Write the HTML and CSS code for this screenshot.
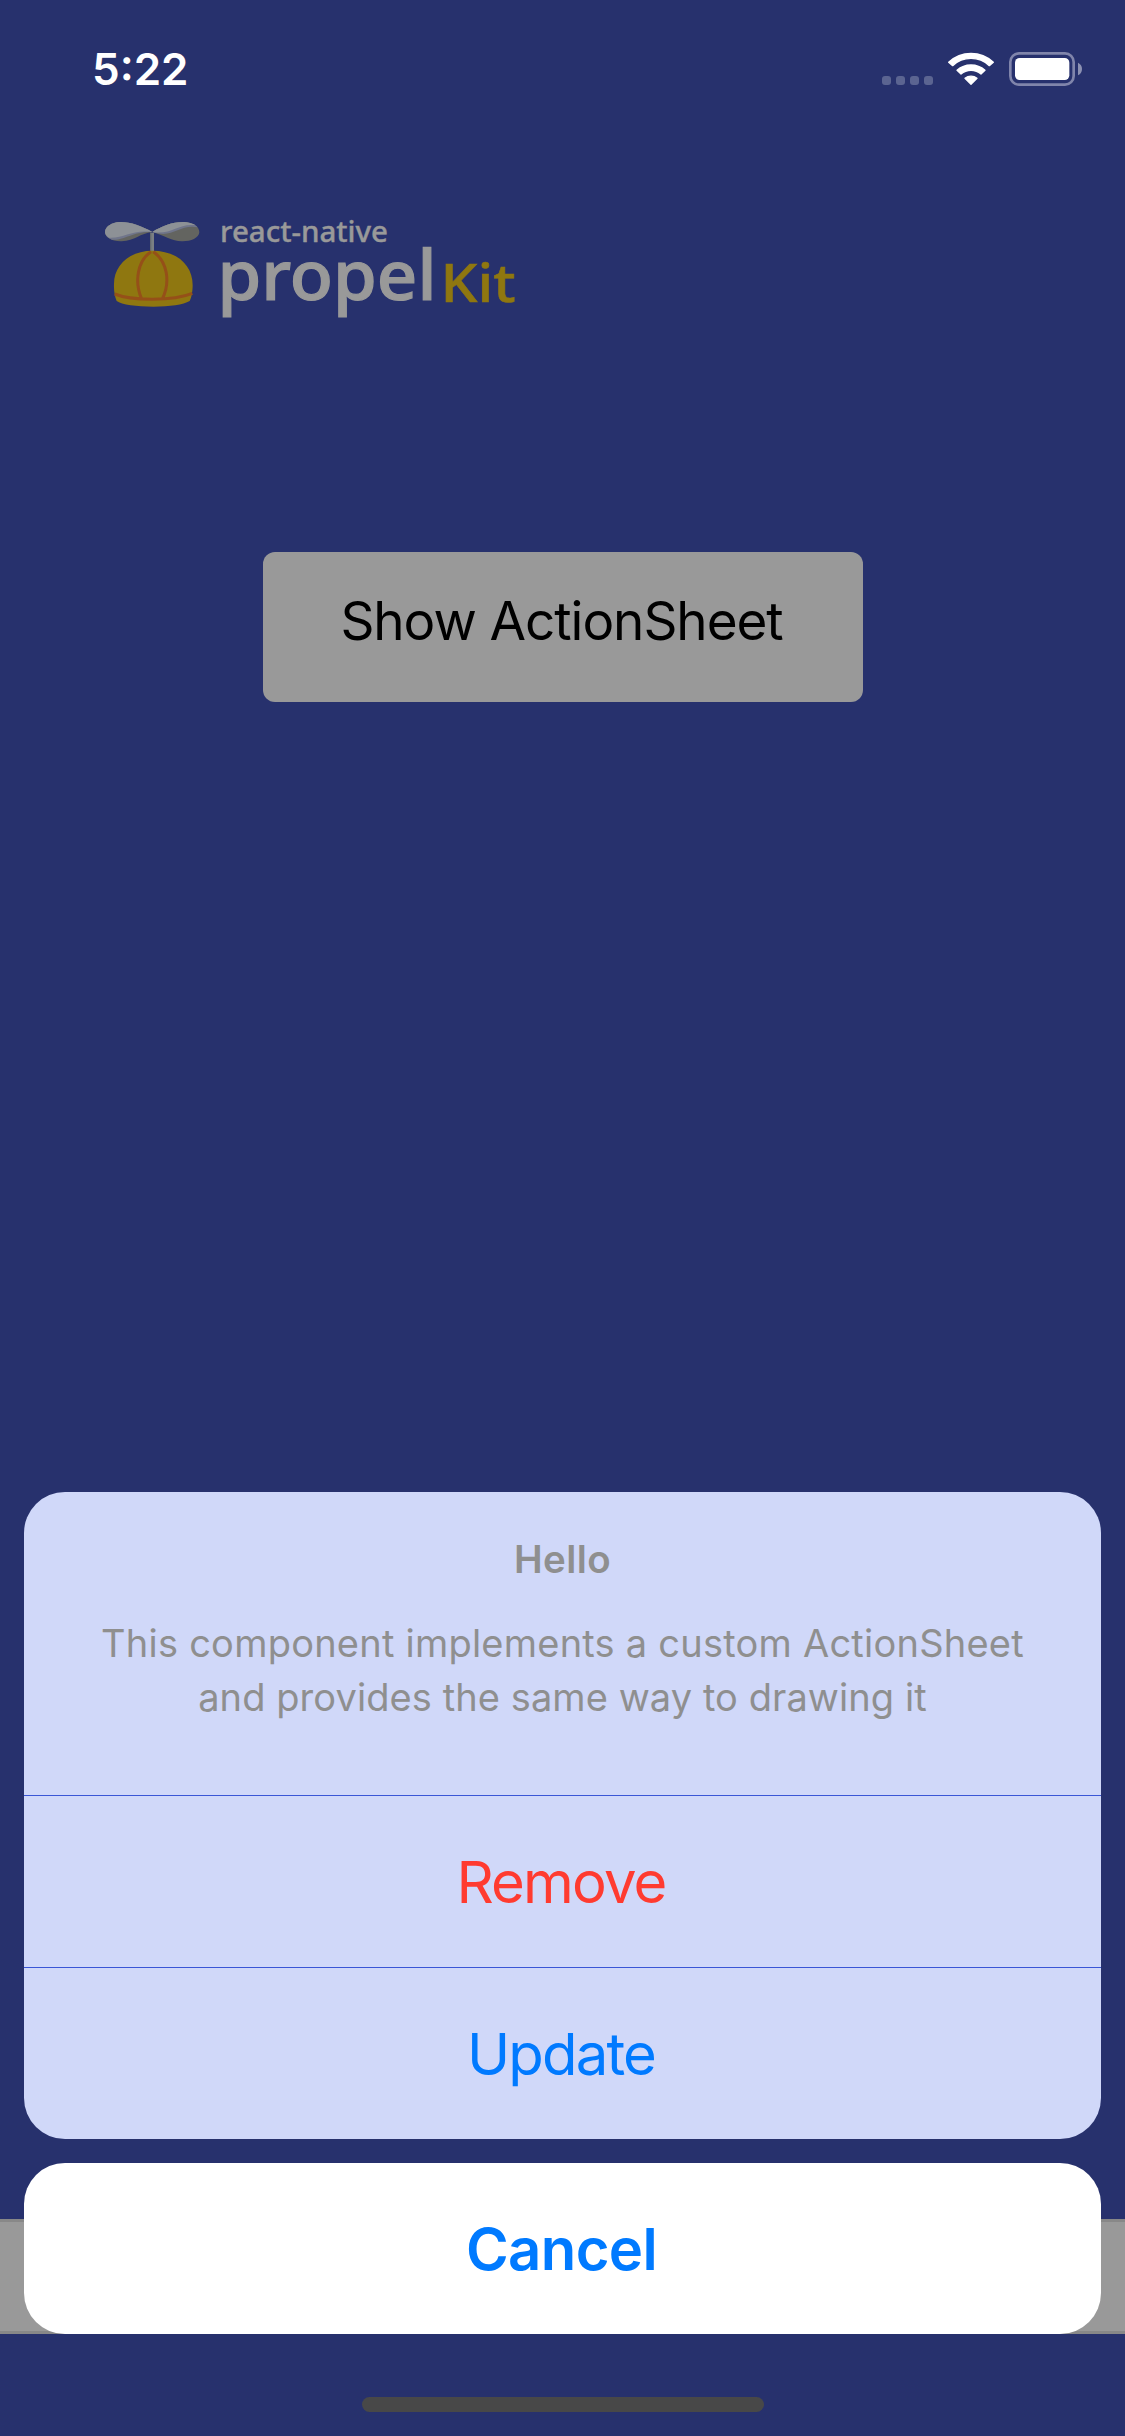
FILE: index.html
```html
<!DOCTYPE html>
<html lang="en">
<head>
<meta charset="utf-8">
<title>ActionSheet</title>
<link rel="stylesheet" href="styles.css">
</head>
<body>
<div class="screen">
  <header class="status">
    <span class="time">5:22</span>
    <svg class="indicators" viewBox="0 0 720 240" aria-hidden="true">
      <g fill="#5b6491">
        <rect x="66" y="138" width="27" height="27" rx="9"/>
        <rect x="108" y="138" width="27" height="27" rx="9"/>
        <rect x="150" y="138" width="27" height="27" rx="9"/>
        <rect x="192" y="138" width="27" height="27" rx="9"/>
      </g>
      <g fill="#fff" stroke="#fff" stroke-width="4" stroke-linejoin="round">
        <path d="M266 97A98 98 0 0 1 400 97L388 107A80 80 0 0 0 278 107Z"/>
        <path d="M291 121A63 63 0 0 1 375 121L363 132A46 46 0 0 0 303 132Z"/>
        <path d="M315 145A28 28 0 0 1 351 145L333 163Z"/>
      </g>
      <rect x="451" y="70" width="190" height="94" rx="26" fill="none" stroke="#8085ab" stroke-width="8"/>
      <rect x="465" y="84" width="163" height="66" rx="14" fill="#fff"/>
      <path d="M654 98Q666 104 666 117T654 136Z" fill="#8c91b2"/>
    </svg>
  </header>

  <div class="brand">
    <svg class="logo" viewBox="0 0 440 130" role="img" aria-label="react-native propelKit">
      <g transform="scale(.33333)">
        <path d="M180 98h12v56h-12z" fill="#7b7f83"/>
        <path d="M180 98h4v56h-4z" fill="#666a70"/>
        <path d="M187 96C150 75 110 62 80 67C58 72 45 83 45 97C46 112 65 125 95 124C135 122 150 100 187 96Z" fill="#636460"/>
        <path d="M187 96C150 75 110 62 80 67C58 72 45 83 45 97C46 107 53 115 66 119C105 122 125 94 187 96Z" fill="#70758a"/>
        <path d="M187 96C150 75 110 62 80 67C58 72 45 83 45 97C46 104 50 109 57 113C105 115 125 88 187 96Z" fill="#8d9196"/>
        <path d="M187 96C220 75 260 62 290 67C315 72 328 82 328 97C327 115 300 125 275 124C245 122 225 108 187 96Z" fill="#636460"/>
        <path d="M187 96C220 75 260 62 290 67C307 70 318 76 323 82C272 72 250 112 200 99Z" fill="#70758a"/>
        <path d="M187 96C220 75 260 62 290 67C302 69 311 72 317 76C266 68 245 106 187 96Z" fill="#8d9196"/>
        <path d="M72 252C72 195 120 152 187 152C260 152 308 195 308 255C308 275 304 295 299 303C280 314 240 320 190 320C140 320 95 314 80 303C74 290 71 270 72 252Z" fill="#8f7710"/>
        <path d="M183 155C143 182 132 245 155 297M190 155C232 185 242 245 217 297M74 282C125 303 250 303 307 280" fill="none" stroke="#955018" stroke-width="9"/>
      </g>
      <g class="wordmark">
        <text class="small" x="130" y="41.5" font-size="29.5" textLength="168" lengthAdjust="spacingAndGlyphs">react-native</text>
        <text class="large" x="127.5" y="99.5" font-size="69" textLength="219" lengthAdjust="spacingAndGlyphs">propel</text>
        <text class="kit" x="350.5" y="101.5" font-size="53" textLength="75" lengthAdjust="spacingAndGlyphs">Kit</text>
      </g>
    </svg>
  </div>

  <main class="content">
    <button class="show">Show ActionSheet</button>
  </main>

  <section class="sheet">
    <div class="group">
      <div class="intro">
        <h1 class="title">Hello</h1>
        <p class="message"><span class="line line-one">This component implements a custom ActionSheet</span><br><span class="line line-two">and provides the same way to drawing it</span></p>
      </div>
      <button class="action remove"><span>Remove</span></button>
      <button class="action update"><span>Update</span></button>
    </div>
    <div class="footer">
      <button class="action cancel"><span>Cancel</span></button>
    </div>
  </section>
  <div class="home"></div>
</div>
</body>
</html>
```
FILE: styles.css
```css
* { box-sizing: border-box; }
body { margin: 0; background: #27316d; }
button { border: 0; font: inherit; padding: 0; margin: 0; }

.screen {
  width: 1125px;
  height: 2436px;
  display: flex;
  flex-direction: column;
  background: #27316d;
  font-family: Inter, "Liberation Sans", sans-serif;
  overflow: hidden;
}

.status {
  height: 200px;
  padding: 30px 25px 0 92px;
  display: flex;
  justify-content: space-between;
  align-items: flex-start;
}
.time {
  font-size: 44px;
  line-height: 54px;
  padding-top: 12px;
  font-weight: 600;
  color: #fff;
}
.indicators { width: 240px; height: 80px; display: block; }

.brand { height: 352px; padding-left: 90px; }
.logo { width: 440px; height: 130px; display: block; overflow: visible; }
.wordmark { font-family: "Noto Sans", "Open Sans", sans-serif; font-weight: 500; fill: #999; }
.small { stroke: #999; stroke-width: 0.4px; }
.large { stroke: #999; stroke-width: 1.2px; }
.kit { fill: #8f7710; stroke: #8f7710; stroke-width: 0.6px; }

.content { height: 940px; display: flex; justify-content: center; align-items: flex-start; }
.show {
  width: 600px;
  height: 150px;
  margin-left: 1px;
  border-radius: 12px;
  background: #999;
  color: #000;
  font-size: 53px;
  line-height: 64px;
  padding: 0 3px 13px 0;
  letter-spacing: -1.05px;
}

.sheet { display: flex; flex-direction: column; gap: 24px; }
.group {
  margin: 0 24px;
  height: 647px;
  border-radius: 41px;
  overflow: hidden;
  background: #d0d8f9;
}
.intro { height: 303px; padding-top: 43px; text-align: center; color: #8f8f8f; }
.title { margin: 0; font-size: 38.5px; line-height: 48px; font-weight: 600; letter-spacing: 0.4px; }
.message { margin: 33px 0 0; font-size: 38px; line-height: 54px; }
.line { white-space: nowrap; }
.line-one { letter-spacing: 0.23px; }
.line-two { letter-spacing: 0.08px; }

.action {
  display: block;
  width: 100%;
  height: 172px;
  padding-right: 3px;
  border-top: 1px solid #3a56d6;
  background: transparent;
  text-align: center;
  font-size: 58px;
  line-height: 70px;
  letter-spacing: -1.8px;
}
.remove { color: #ff3b30; }
.update { color: #007aff; }

.footer {
  height: 171px;
  padding: 0 24px;
  background: linear-gradient(#27316d 56px, #888 56px, #888 59px, #999 59px, #999 168px, #888 168px);
}
.cancel {
  height: 171px;
  padding-right: 2px;
  border-top: 0;
  border-radius: 41px;
  background: #fff;
  color: #007aff;
  font-weight: 600;
  letter-spacing: -0.6px;
}

.home { width: 402px; height: 15px; margin: 63px auto 0 362px; border-radius: 8px; background: #484848; }
```
